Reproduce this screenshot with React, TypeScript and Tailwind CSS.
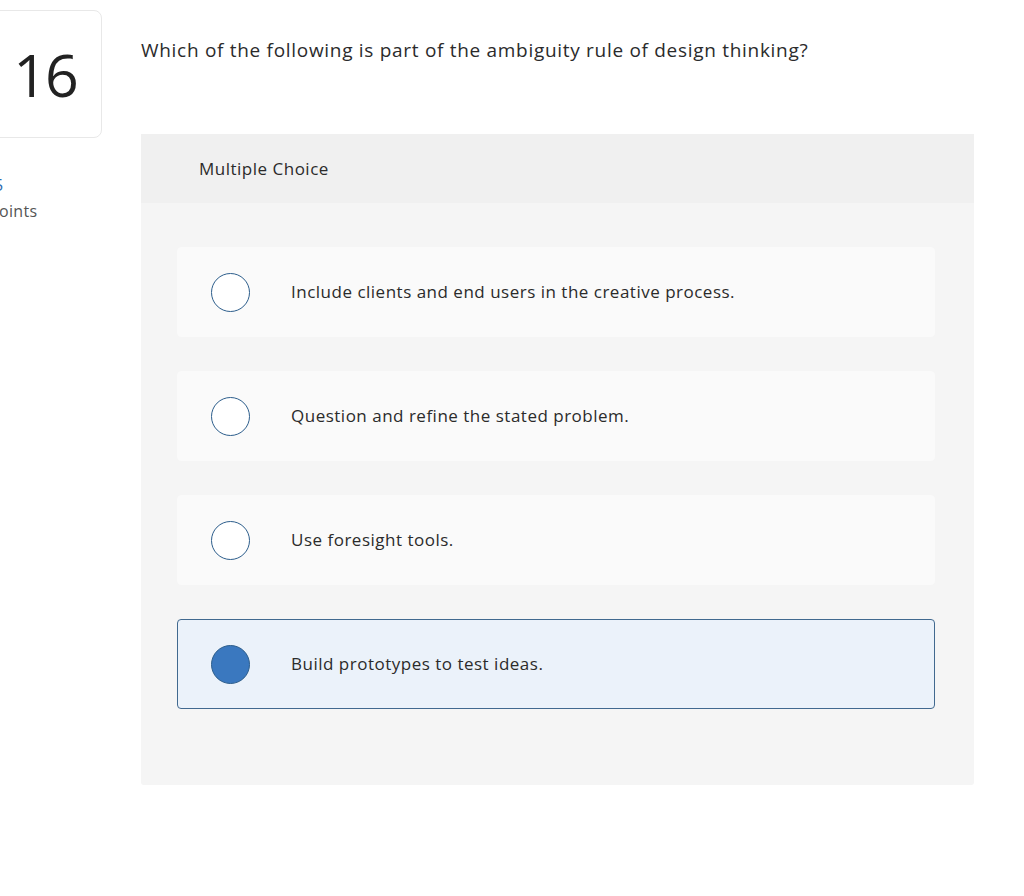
import React from 'react';

const options = [
  'Include clients and end users in the creative process.',
  'Question and refine the stated problem.',
  'Use foresight tools.',
  'Build prototypes to test ideas.',
];

export default function App() {
  const selected = 3;
  return (
    <div
      className="min-h-[896px] w-[1024px] bg-white text-[#333] overflow-hidden"
      style={{ fontFamily: '"Open Sans", Lato, sans-serif' }}
    >
      <div className="flex">
        {/* Question number column */}
        <div className="w-[141px] shrink-0 pt-[10px]">
          <div className="ml-[-20px] w-[122px] h-[128px] border border-[#e8e8e8] rounded-[8px] flex items-center justify-center pl-[8px]">
            <span className="text-[59px] leading-none text-[#222] font-normal tracking-[-2px]">16</span>
          </div>
          <div className="ml-[-6px] mt-[38px] text-[16px] leading-[18px] text-[#2c6cb3]">5</div>
          <div className="ml-[-11px] mt-[5px] text-[16px] tracking-[0.3px] text-[#555]">points</div>
        </div>

        {/* Question body */}
        <div className="w-[833px]">
          <div className="pt-[36px] text-[19px] leading-[28px] tracking-[0.7px] text-[#2b2b2b]">
            Which of the following is part of the ambiguity rule of design thinking?
          </div>

          <div className="mt-[70px] bg-[#f5f5f5] rounded-[3px]">
            <div className="h-[69px] bg-[#f0f0f0] flex items-center pl-[58px] text-[17px] tracking-[0.5px] text-[#2b2b2b]">
              Multiple Choice
            </div>
            <div className="pl-[36px] pr-[39px] pt-[44px] pb-[76px] flex flex-col gap-[34px]">
              {options.map((opt, i) => {
                const isSel = i === selected;
                return (
                  <div
                    key={opt}
                    className={
                      isSel
                        ? 'h-[90px] flex items-center rounded-[4px] border border-[#41698f] bg-[#ebf2fa]'
                        : 'h-[90px] flex items-center rounded-[4px] border border-[#fafafa] bg-[#fafafa]'
                    }
                  >
                    <div className="w-[113px] shrink-0 flex items-center pl-[33px]">
                      {isSel ? (
                        <div className="w-[39px] h-[39px] rounded-full bg-[#3a78bf] border border-[#2d5e8c]" />
                      ) : (
                        <div className="w-[39px] h-[39px] rounded-full bg-white border-[1.5px] border-[#2d5e8c]" />
                      )}
                    </div>
                    <span className="text-[17px] tracking-[0.5px] text-[#2b2b2b]">{opt}</span>
                  </div>
                );
              })}
            </div>
          </div>
        </div>
      </div>
    </div>
  );
}
